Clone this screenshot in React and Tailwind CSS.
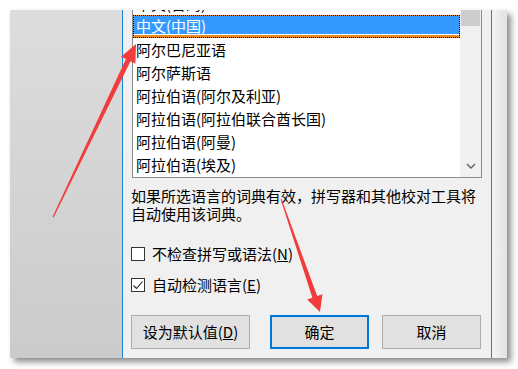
import React from "react";

const items = [
	"中文(台湾)",
	"中文(中国)",
	"阿尔巴尼亚语",
	"阿尔萨斯语",
	"阿拉伯语(阿尔及利亚)",
	"阿拉伯语(阿拉伯联合酋长国)",
	"阿拉伯语(阿曼)",
	"阿拉伯语(埃及)",
];

const Checkbox = ({ checked, children }) => (
	<div className="flex items-center h-[20px]">
		<div className="w-[14px] h-[14px] border border-[#333333] bg-white flex items-center justify-center">
			{checked && (
				<svg width="12" height="12" viewBox="0 0 12 12">
					<polyline points="1.5,6.5 4.5,9.5 10.5,2.5" fill="none" stroke="#222" strokeWidth="1.1" />
				</svg>
			)}
		</div>
		<span className="ml-[7px] leading-[20px]">{children}</span>
	</div>
);

const Arrows = () => (
	<svg className="absolute inset-0 pointer-events-none" width="518" height="369" viewBox="0 0 518 369">
		<polygon
			points="52.5,217 125.9,59.1 121,56.7 136,44 135.4,63.7 130.5,61.3 53.6,217.4"
			fill="#f23b3b"
		/>
		<polygon
			points="280.5,199 312.4,297.7 307.2,299.5 320,312 322.4,294.3 317.2,296.1 281.5,198.8"
			fill="#f23b3b"
		/>
	</svg>
);

export default function App() {
	return (
		<div
			className="relative w-[518px] h-[369px] bg-white p-[10px] text-[15px] text-black"
			style={{ fontFamily: '"Noto Sans CJK SC", "Noto Sans", sans-serif' }}
		>
			<div className="flex w-[497px] h-[348px] overflow-hidden shadow-[4px_4px_6px_rgba(0,0,0,0.45)]">
				{/* desktop behind the dialog */}
				<div className="w-[112px] bg-gradient-to-b from-[#dddddd] to-[#cbcbcb]" />
				<div className="w-[1px] bg-[#1883d7]" />

				{/* dialog */}
				<div className="w-[368px] bg-[#f0f0f0] px-[8px] flex flex-col">
					<div className="mt-[-19px] ml-[1px] w-[350px] h-[187px] border border-[#8c8c8c] bg-white flex">
						<div className="flex-1 flex flex-col">
							{items.map((item, i) =>
								i === 1 ? (
									<div key={item} className="h-[23px] bg-[#e88a20] border border-dotted border-black">
										<div className="h-[19px] bg-[#3399ff] text-white pl-[2px] leading-[20px] border-b border-white">
											{item}
										</div>
									</div>
								) : (
									<div key={item} className="h-[23px] pl-[3px] leading-[23px]">
										{item}
									</div>
								)
							)}
						</div>
						<div className="w-[21px] bg-[#f0f0f0] flex flex-col">
							<div className="mt-[14px] ml-[1px] w-[19px] h-[20px] bg-[#cdcdcd]" />
							<div className="mt-auto mb-[8px] flex justify-center">
								<svg width="10" height="6" viewBox="0 0 10 6">
									<polyline points="1,1 5,5 9,1" fill="none" stroke="#606060" strokeWidth="1.4" />
								</svg>
							</div>
						</div>
					</div>

					<p className="mt-[9px] leading-[18px]">
						如果所选语言的词典有效，拼写器和其他校对工具将
						<br />
						自动使用该词典。
					</p>

					<div className="mt-[21px]">
						<Checkbox>
							不检查拼写或语法(<span className="underline">N</span>)
						</Checkbox>
					</div>
					<div className="mt-[11px]">
						<Checkbox checked>
							自动检测语言(<span className="underline">E</span>)
						</Checkbox>
					</div>

					<div className="mt-[20px] flex">
						<button className="w-[119px] h-[34px] bg-[#e1e1e1] border border-[#adadad]">
							设为默认值(<span className="underline">D</span>)
						</button>
						<button className="ml-[20px] w-[99px] h-[34px] bg-[#e1e1e1] border-2 border-[#0078d7]">
							确定
						</button>
						<button className="ml-[13px] w-[99px] h-[34px] bg-[#e1e1e1] border border-[#adadad]">
							取消
						</button>
					</div>
				</div>

				<div className="w-[1px] bg-[#1883d7]" />
				<div className="flex-1 bg-gradient-to-r from-[#f3f3f3] to-[#e2e2e2]" />
			</div>
			<Arrows />
		</div>
	);
}
